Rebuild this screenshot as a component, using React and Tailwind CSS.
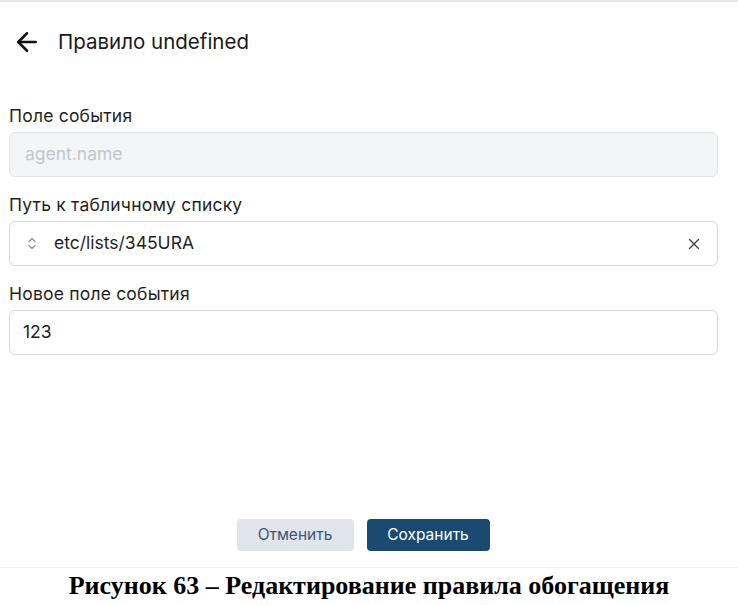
import React from 'react';
import { ArrowLeft, X } from 'lucide-react';

const Label = ({ children, first }) => (
  <div className={`text-[17.5px] leading-[22px] tracking-[0.2px] text-[#1f1f1f] mb-[5px] ${first ? '' : 'mt-[17px]'}`}>{children}</div>
);

const UpDown = () => (
  <svg width="8" height="15" viewBox="0 0 8 15" fill="none" stroke="#8a8f98" strokeWidth="1.2" strokeLinecap="round" strokeLinejoin="round">
    <path d="M1 5.5 4 2.5 7 5.5" />
    <path d="M1 9.5 4 12.5 7 9.5" />
  </svg>
);

export default function App() {
  return (
    <div className="w-[738px] h-[605px] bg-white flex flex-col" style={{ fontFamily: 'Inter, "Noto Sans", sans-serif' }}>
      <div className="h-[568px] flex flex-col border-t-2 border-[#e6e7eb] border-b border-b-[#f1f1f3]">
        {/* header */}
        <div className="flex items-center h-[40px] mt-[20px] pl-[12px] gap-[16px]">
          <ArrowLeft size={30} strokeWidth={2} className="text-[#111]" />
          <span className="text-[20.5px] text-[#1a1a1a]">Правило undefined</span>
        </div>

        {/* form */}
        <div className="flex flex-col pl-[9px] pr-[20px] mt-[43px]">
          <Label first>Поле события</Label>
          <div className="h-[45px] rounded-[6px] border border-[#e4e6ea] bg-[#f4f5f7] flex items-center px-[15px] text-[17.5px] text-[#c3c6cc]">
            agent.name
          </div>

          <Label>Путь к табличному списку</Label>
          <div className="h-[45px] rounded-[6px] border border-[#d7dae0] bg-white flex items-center pl-[18px] pr-[14px] text-[17.5px] text-[#1f1f1f]">
            <UpDown />
            <span className="ml-[18px] flex-1">etc/lists/345URA</span>
            <X size={18} strokeWidth={1.8} className="text-[#444]" />
          </div>

          <Label>Новое поле события</Label>
          <div className="h-[45px] rounded-[6px] border border-[#d7dae0] bg-white flex items-center px-[13px] text-[17.5px] text-[#1f1f1f]">
            123
          </div>
        </div>

        <div className="flex-1" />

        {/* actions */}
        <div className="flex justify-center gap-[13px] mb-[16px] pr-[12px]">
          <button className="w-[117px] h-[32px] rounded-[4px] bg-[#e0e5ec] text-[#3c5674] text-[15.5px]">Отменить</button>
          <button className="w-[123px] h-[32px] rounded-[4px] bg-[#1b4a71] text-white text-[15.5px]">Сохранить</button>
        </div>
      </div>

      {/* caption */}
      <div className="flex justify-center pt-[3px]">
        <span
          className="text-[26px] font-bold text-black leading-[30px]"
          style={{ fontFamily: '"Liberation Serif", "Times New Roman", serif' }}
        >
          Рисунок 63 – Редактирование правила обогащения
        </span>
      </div>
    </div>
  );
}
